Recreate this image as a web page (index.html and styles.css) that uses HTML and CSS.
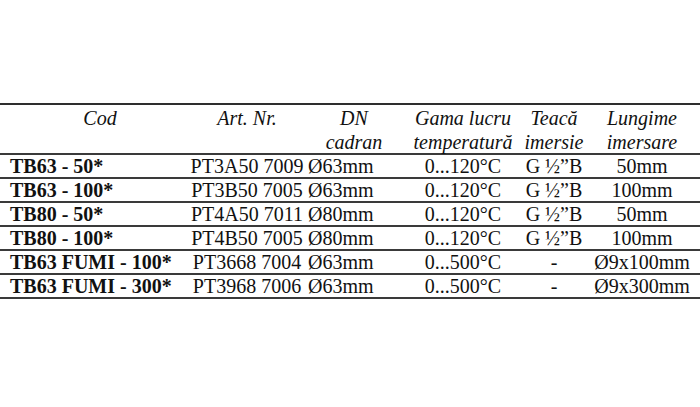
FILE: index.html
```html
<!DOCTYPE html>
<html lang="ro">
<head>
<meta charset="utf-8">
<title>Tabel termometre</title>
<link rel="stylesheet" href="styles.css">
</head>
<body>
<div class="table">
  <div class="row head">
    <div class="c c1 hcod">Cod</div>
    <div class="c c2">Art. Nr.</div>
    <div class="c c3h">DN<br>cadran</div>
    <div class="c c4">Gama lucru<br>temperatură</div>
    <div class="c c5">Teacă<br>imersie</div>
    <div class="c c6">Lungime<br>imersare</div>
  </div>
  <div class="row data">
    <div class="c c1">TB63 - 50*</div>
    <div class="c c2">PT3A50 7009</div>
    <div class="c c3">Ø63mm</div>
    <div class="c c4">0...120°C</div>
    <div class="c c5">G ½”B</div>
    <div class="c c6">50mm</div>
  </div>
  <div class="row data">
    <div class="c c1">TB63 - 100*</div>
    <div class="c c2">PT3B50 7005</div>
    <div class="c c3">Ø63mm</div>
    <div class="c c4">0...120°C</div>
    <div class="c c5">G ½”B</div>
    <div class="c c6">100mm</div>
  </div>
  <div class="row data">
    <div class="c c1">TB80 - 50*</div>
    <div class="c c2">PT4A50 7011</div>
    <div class="c c3">Ø80mm</div>
    <div class="c c4">0...120°C</div>
    <div class="c c5">G ½”B</div>
    <div class="c c6">50mm</div>
  </div>
  <div class="row data">
    <div class="c c1">TB80 - 100*</div>
    <div class="c c2">PT4B50 7005</div>
    <div class="c c3">Ø80mm</div>
    <div class="c c4">0...120°C</div>
    <div class="c c5">G ½”B</div>
    <div class="c c6">100mm</div>
  </div>
  <div class="row data">
    <div class="c c1">TB63 FUMI - 100*</div>
    <div class="c c2">PT3668 7004</div>
    <div class="c c3">Ø63mm</div>
    <div class="c c4">0...500°C</div>
    <div class="c c5">-</div>
    <div class="c c6">Ø9x100mm</div>
  </div>
  <div class="row data">
    <div class="c c1">TB63 FUMI - 300*</div>
    <div class="c c2">PT3968 7006</div>
    <div class="c c3">Ø63mm</div>
    <div class="c c4">0...500°C</div>
    <div class="c c5">-</div>
    <div class="c c6">Ø9x300mm</div>
  </div>
</div>
</body>
</html>
```
FILE: styles.css
```css
html, body {
  margin: 0;
  padding: 0;
  background: #ffffff;
}

body {
  font-family: "Liberation Serif", "Times New Roman", serif;
  font-size: 20px;
  color: #111111;
}

.table {
  margin-top: 103px;
  border-top: 2px solid #2e2e2e;
}

.row {
  display: grid;
  grid-template-columns: 188px 118px 96px 122px 60px 116px;
  border-bottom: 2px solid #3a3a3a;
}

.c {
  white-space: nowrap;
  text-align: center;
}

.head {
  height: 47px;
  padding-top: 1px;
  line-height: 24px;
  font-style: italic;
}

.head .hcod {
  padding-left: 12px;
}

.c3h {
  text-align: center;
}

.data {
  height: 22px;
  line-height: 22px;
}

.data .c1 {
  text-align: left;
  padding-left: 10px;
  font-weight: bold;
}

.data .c3 {
  text-align: left;
  padding-left: 2px;
}
```
